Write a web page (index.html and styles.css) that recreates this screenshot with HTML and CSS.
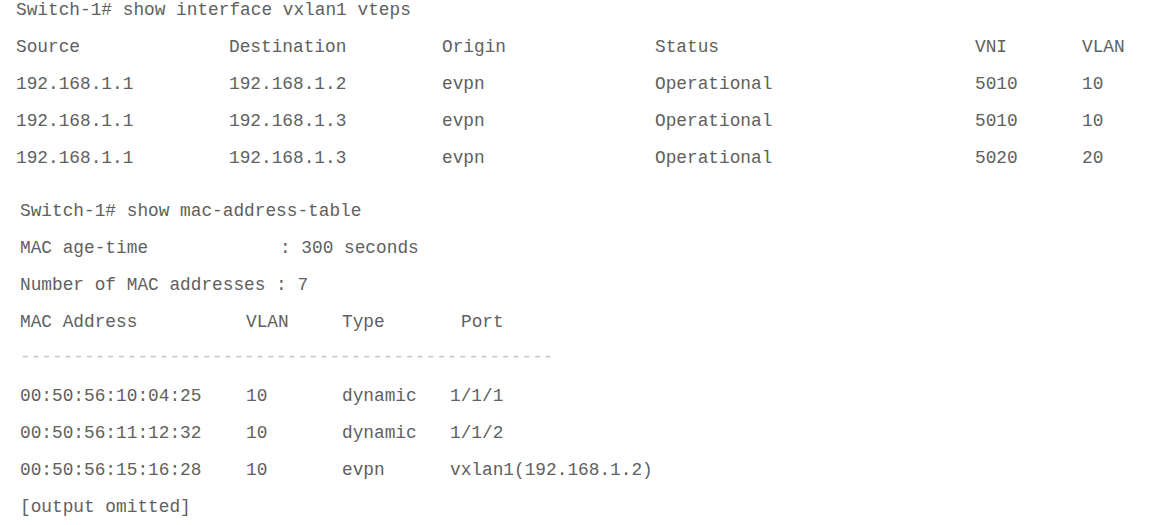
FILE: index.html
```html
<!DOCTYPE html>
<html>
<head>
<meta charset="utf-8">
<link rel="stylesheet" href="styles.css">
</head>
<body>
<div class="term">
  <section class="vteps">
    <div class="cmd">Switch-1# show interface vxlan1 vteps</div>
    <div class="grid g1">
      <span>Source</span><span>Destination</span><span>Origin</span><span>Status</span><span>VNI</span><span>VLAN</span>
      <span>192.168.1.1</span><span>192.168.1.2</span><span>evpn</span><span>Operational</span><span>5010</span><span>10</span>
      <span>192.168.1.1</span><span>192.168.1.3</span><span>evpn</span><span>Operational</span><span>5010</span><span>10</span>
      <span>192.168.1.1</span><span>192.168.1.3</span><span>evpn</span><span>Operational</span><span>5020</span><span>20</span>
    </div>
  </section>
  <section class="mac">
    <div class="line">Switch-1# show mac-address-table</div>
    <div class="line kv"><span class="k">MAC age-time</span><span>: 300 seconds</span></div>
    <div class="line">Number of MAC addresses : 7</div>
    <div class="grid g2">
      <span>MAC Address</span><span>VLAN</span><span>Type</span><span class="port-h">Port</span>
    </div>
    <div class="line dashes">--------------------------------------------------</div>
    <div class="grid g2">
      <span>00:50:56:10:04:25</span><span>10</span><span>dynamic</span><span>1/1/1</span>
      <span>00:50:56:11:12:32</span><span>10</span><span>dynamic</span><span>1/1/2</span>
      <span>00:50:56:15:16:28</span><span>10</span><span>evpn</span><span>vxlan1(192.168.1.2)</span>
    </div>
    <div class="line">[output omitted]</div>
  </section>
</div>
</body>
</html>
```

FILE: styles.css
```css
html, body {
  margin: 0;
  padding: 0;
  background: #ffffff;
}

.term {
  font-family: "Courier New", "Liberation Mono", monospace;
  font-size: 17.8px;
  color: #606060;
  white-space: nowrap;
}

.vteps {
  padding-left: 16px;
}

.cmd {
  line-height: 20px;
  height: 20px;
  margin-bottom: 8.5px;
}

.grid {
  display: grid;
  grid-auto-rows: 37px;
  align-items: center;
}

.g1 {
  grid-template-columns: 213px 213px 213px 320px 107px 1fr;
}

.mac {
  padding-left: 20px;
  margin-top: 16px;
}

.line {
  height: 37px;
  line-height: 37px;
}

.kv {
  display: flex;
}

.kv .k {
  width: 260px;
}

.g2 {
  grid-template-columns: 226px 96px 108px 1fr;
}

.port-h {
  padding-left: 11px;
}

.dashes {
  color: #c4c4c4;
  line-height: 33px;
}
```
